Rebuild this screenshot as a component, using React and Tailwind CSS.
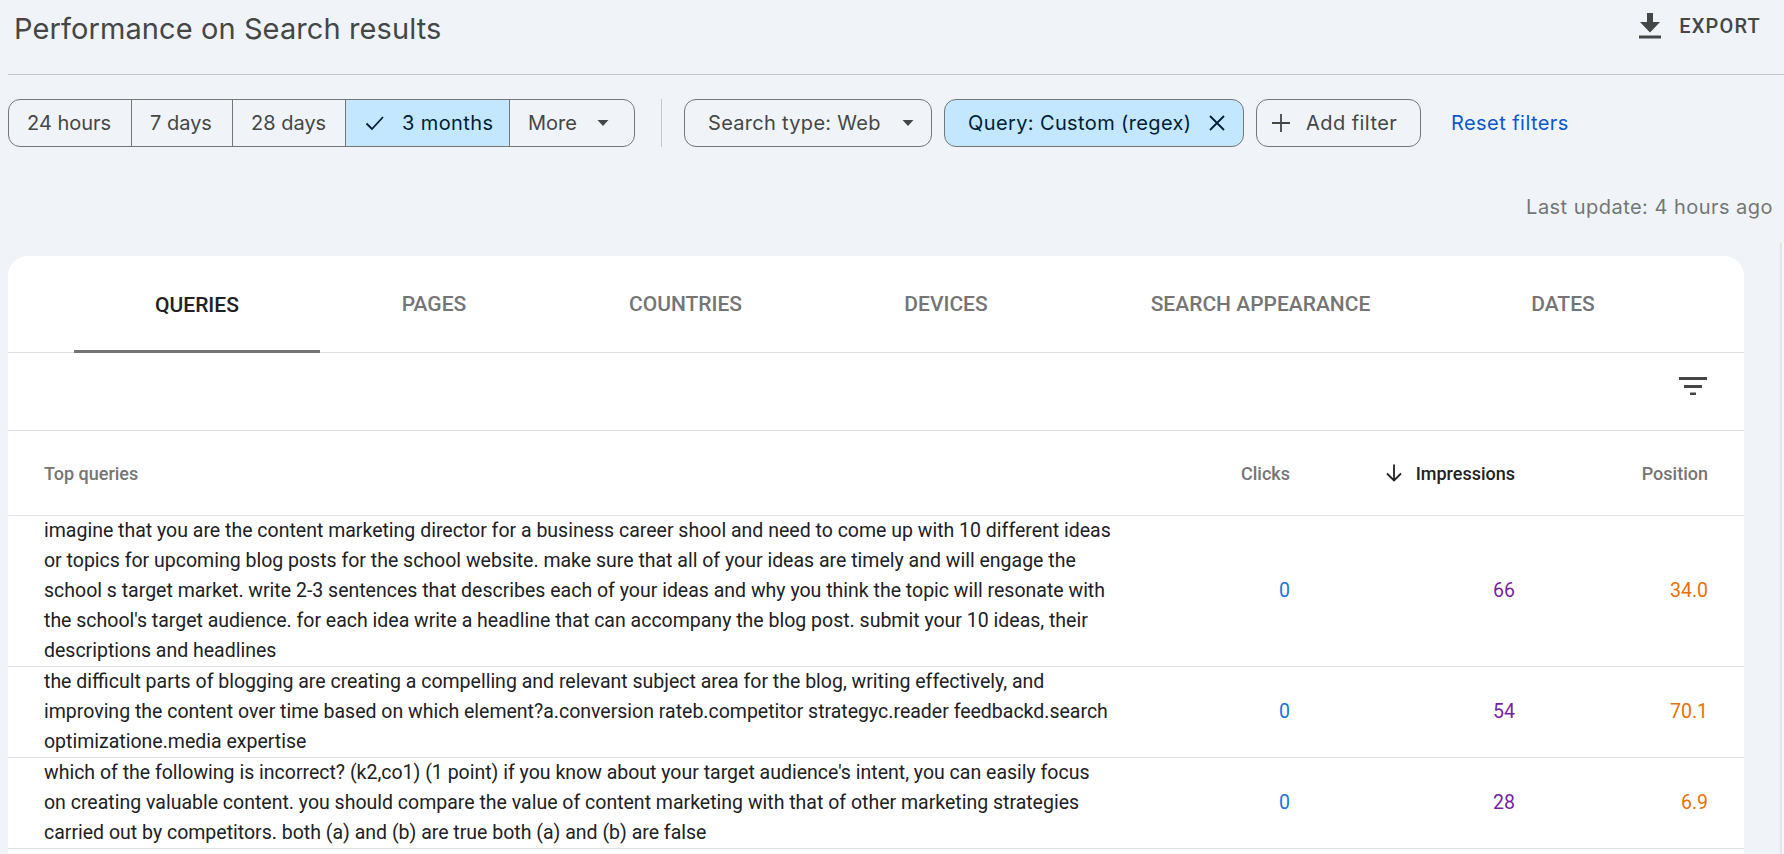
const GS = "font-[family-name:Inter,sans-serif]";
const RB = "font-[family-name:Roboto,sans-serif]";

function Caret({ className = "" }) {
  return (
    <svg width="12" height="6" viewBox="0 0 12 6" className={className}>
      <path d="M0.5 0 H11.5 L6 6 Z" fill="currentColor" />
    </svg>
  );
}

function Seg({ w, children, active, last }) {
  return (
    <div
      className={`flex items-center h-full ${w} ${last ? "" : "border-r border-[#747775]"} ${active ? "bg-[#c2e7ff] text-[#001d35]" : ""}`}
    >
      {children}
    </div>
  );
}

const rows = [
  {
    h: "h-[151px]",
    text: "imagine that you are the content marketing director for a business career shool and need to come up with 10 different ideas or topics for upcoming blog posts for the school website. make sure that all of your ideas are timely and will engage the school s target market. write 2-3 sentences that describes each of your ideas and why you think the topic will resonate with the school's target audience. for each idea write a headline that can accompany the blog post. submit your 10 ideas, their descriptions and headlines",
    c: "0",
    i: "66",
    p: "34.0",
  },
  {
    h: "h-[91px]",
    text: "the difficult parts of blogging are creating a compelling and relevant subject area for the blog, writing effectively, and improving the content over time based on which element?a.conversion rateb.competitor strategyc.reader feedbackd.search optimizatione.media expertise",
    c: "0",
    i: "54",
    p: "70.1",
  },
  {
    h: "h-[91px]",
    text: "which of the following is incorrect? (k2,co1) (1 point) if you know about your target audience's intent, you can easily focus on creating valuable content. you should compare the value of content marketing with that of other marketing strategies carried out by competitors. both (a) and (b) are true both (a) and (b) are false",
    c: "0",
    i: "28",
    p: "6.9",
  },
];

export default function App() {
  return (
    <div className={`w-[1784px] h-[854px] overflow-hidden bg-[#f0f4f9] ${RB} text-[#444746]`}>
      {/* header */}
      <div className="ml-2 h-[75px] border-b border-[#c7c7c7] flex justify-between">
        <h1 className={`${GS} ml-[6px] mt-[11px] text-[29px] leading-[36px] tracking-[0.1px] font-normal`}>
          Performance on Search results
        </h1>
        <div className="flex items-start mt-[13px] mr-[23px]">
          <svg width="22" height="26" viewBox="0 0 22 26" className="text-[#444746] -ml-px">
            <path d="M8 0 H14 V9 H21 L11 19.5 L1 9 H8 Z M0 22.5 H22 V25.5 H0 Z" fill="currentColor" />
          </svg>
          <span className={`${RB} font-medium ml-[18px] text-[20px] leading-[26px] tracking-[1.2px]`}>EXPORT</span>
        </div>
      </div>

      {/* filters */}
      <div className={`${GS} flex items-center mt-[24px] ml-2 h-[48px] text-[20px]`}>
        <div className="flex h-full w-[627px] items-center border border-[#747775] rounded-[12px] overflow-hidden">
          <Seg w="w-[123px] pl-[18px]">24 hours</Seg>
          <Seg w="w-[101px] pl-[18px]">7 days</Seg>
          <Seg w="w-[113px] pl-[18px]">28 days</Seg>
          <Seg w="w-[164px] pl-[19px] tracking-[0.4px]" active>
            <svg width="20" height="18" viewBox="0 0 20 18" className="mr-[17px]">
              <path d="M1.5 9.5 L7 15 L18 3" fill="none" stroke="currentColor" strokeWidth="1.8" />
            </svg>
            3 months
          </Seg>
          <Seg w="flex-1 pl-[18px]" last>
            More
            <Caret className="ml-[20px]" />
          </Seg>
        </div>
        <div className="w-px h-full bg-[#c7c7c7] ml-[26px]" />
        <div className="flex items-center h-full w-[248px] ml-[22px] pl-[23px] tracking-[0.3px] border border-[#747775] rounded-[12px]">
          Search type: Web
          <Caret className="ml-[21px]" />
        </div>
        <div className="flex items-center h-full w-[300px] ml-[12px] pl-[23px] tracking-[0.38px] border border-[#747775] rounded-[12px] bg-[#c2e7ff] text-[#001d35]">
          Query: Custom (regex)
          <svg width="18" height="18" viewBox="0 0 18 18" className="ml-[16px]">
            <path d="M2 2 L16 16 M16 2 L2 16" fill="none" stroke="currentColor" strokeWidth="1.8" />
          </svg>
        </div>
        <div className="flex items-center h-full w-[165px] ml-[12px] pl-[14px] tracking-[0.45px] border border-[#747775] rounded-[12px]">
          <svg width="20" height="20" viewBox="0 0 20 20" className="mr-[15px]">
            <path d="M10 1 V19 M1 10 H19" fill="none" stroke="currentColor" strokeWidth="1.8" />
          </svg>
          Add filter
        </div>
        <span className="ml-[30px] tracking-[0.44px] text-[#0b57d0]">Reset filters</span>
      </div>

      {/* last update */}
      <div className={`${GS} mt-[47px] pr-[11px] text-right text-[20px] leading-[26px] tracking-[0.47px] text-[#747775]`}>
        Last update: 4 hours ago
      </div>

      {/* card + scroll track */}
      <div className="mt-[23px] pl-2 flex">
        <div className="mt-[13px] w-[1736px] bg-white rounded-t-[20px]">
          <div className="h-[97px] pl-[66px] flex border-b border-[#e0e0e0] text-[21px] font-medium text-[#757575]">
            <div className="h-[97px] w-[246px] flex items-center justify-center text-[#202124] border-b-[3px] border-[#757575] pt-[5px]">QUERIES</div>
            <div className="h-full w-[228px] pt-[2px] flex items-center justify-center">PAGES</div>
            <div className="h-full w-[275px] pt-[2px] flex items-center justify-center">COUNTRIES</div>
            <div className="h-full w-[246px] pt-[2px] flex items-center justify-center">DEVICES</div>
            <div className="h-full w-[383px] pt-[2px] flex items-center justify-center">SEARCH APPEARANCE</div>
            <div className="h-full w-[222px] pt-[2px] flex items-center justify-center">DATES</div>
          </div>
          <div className="h-[78px] flex items-start justify-end pr-[37px] pt-[24px] border-b border-[#e0e0e0]">
            <svg width="28" height="18" viewBox="0 0 28 18" className="text-[#444746]">
              <path d="M0 0 H28 V3 H0 Z M5 8 H23 V11 H5 Z M11 15.5 H17 V18 H11 Z" fill="currentColor" />
            </svg>
          </div>
          <div className="h-[85px] pl-9 pr-9 flex items-center border-b border-[#e0e0e0] text-[18px] font-medium text-[#757575]">
            <div className="w-[1135px]">Top queries</div>
            <div className="w-[111px] text-right">Clicks</div>
            <div className="w-[225px] flex items-center justify-end text-[#202124]">
              <svg width="18" height="18" viewBox="0 0 18 18" className="mr-[13px]">
                <path d="M9 0.5 V16.5 M2 9.5 L9 16.5 L16 9.5" fill="none" stroke="currentColor" strokeWidth="1.8" />
              </svg>
              Impressions
            </div>
            <div className="flex-1 text-right">Position</div>
          </div>
          {rows.map((r) => (
            <div key={r.i} className={`${r.h} pl-9 pr-9 flex items-center border-b border-[#e0e0e0] text-[19.5px] leading-[30px] text-[#202124]`}>
              <div className="w-[1135px] pr-[67px]">{r.text}</div>
              <div className="w-[111px] text-right text-[#1a73e8]">{r.c}</div>
              <div className="w-[225px] text-right text-[#7b1fa2]">{r.i}</div>
              <div className="flex-1 text-right text-[#e8710a]">{r.p}</div>
            </div>
          ))}
        </div>
        <div className="ml-[36px] w-1 h-[700px] border-l-2 border-[#e3e3e3] bg-[#f5f7fa]" />
      </div>
    </div>
  );
}
